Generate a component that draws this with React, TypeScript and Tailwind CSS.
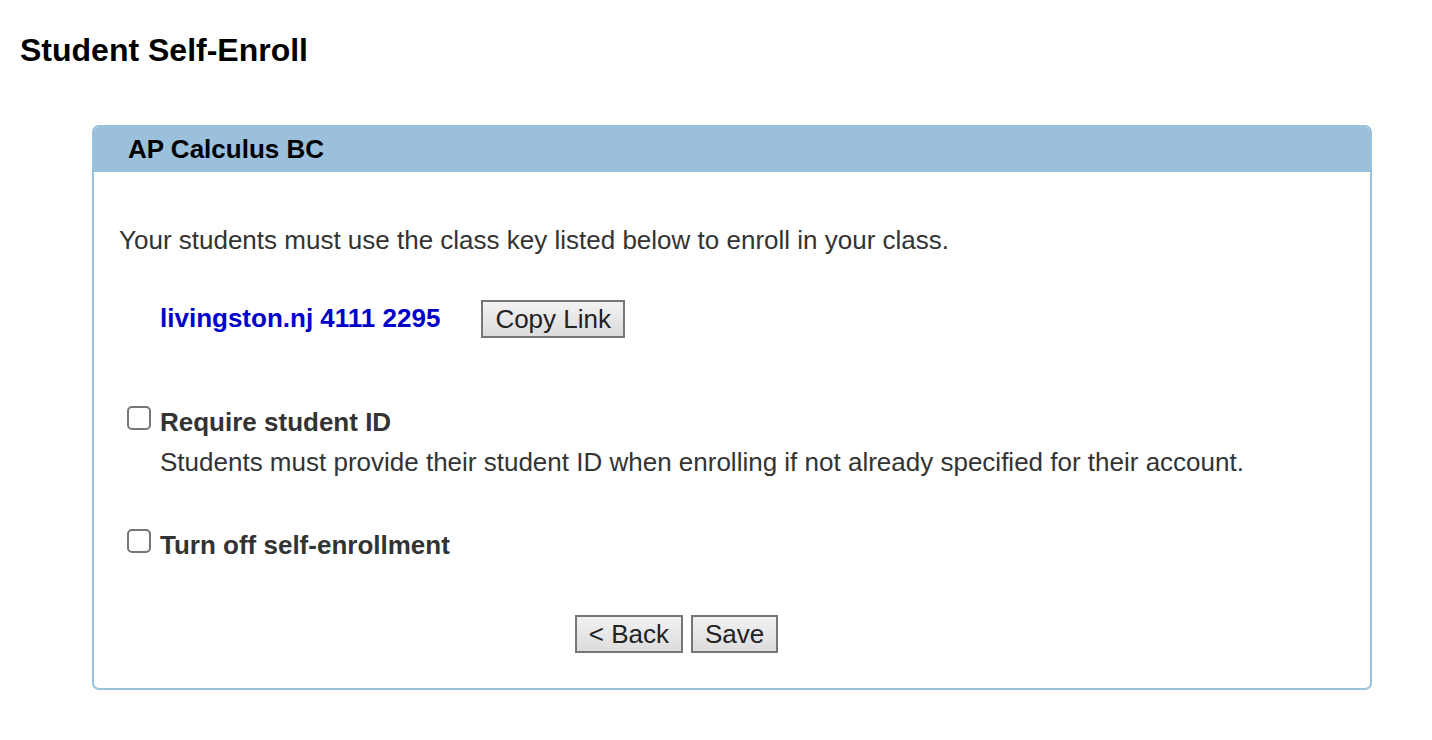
function Checkbox() {
  return <span className="block w-[24px] h-[24px] rounded-[5px] border-2 border-[#767676] bg-white shrink-0" />;
}

function Button({ children, className = "" }: { children: React.ReactNode; className?: string }) {
  return (
    <button
      className={`h-[38px] px-[12px] border-2 border-[#767676] bg-gradient-to-b from-[#f2f2f2] to-[#dcdcdc] text-[26px] leading-none text-[#222] ${className}`}
    >
      {children}
    </button>
  );
}

export default function App() {
  return (
    <div className="min-h-screen bg-white pt-[34px] font-['Liberation_Sans',Arial,sans-serif]">
      <h1 className="pl-[20px] text-[32px] leading-[32px] font-bold text-black">Student Self-Enroll</h1>

      <div className="ml-[92px] mt-[59px] w-[1280px] border-2 border-[#9ac0db] rounded-[7px] overflow-hidden">
        <div className="h-[45px] bg-[#9ac0db] flex items-center pl-[34px]">
          <h2 className="text-[26px] font-bold text-black">AP Calculus BC</h2>
        </div>

        <div className="pl-[25px] pr-[25px] pt-[54px] pb-[35px] text-[#333]">
          <p className="text-[26px] leading-[28px]">
            Your students must use the class key listed below to enroll in your class.
          </p>

          <div className="mt-[45px] pl-[41px] flex items-center gap-[41px]">
            <span className="text-[26px] font-bold text-[#0000cc]">livingston.nj 4111 2295</span>
            <Button>Copy Link</Button>
          </div>

          <div className="mt-[62px] pl-[8px]">
            <div className="flex items-center gap-[9px]">
              <Checkbox />
              <span className="text-[26px] leading-[28px] font-bold mt-[8px]">Require student ID</span>
            </div>
            <p className="mt-[12px] pl-[33px] text-[26px] leading-[28px]">
              Students must provide their student ID when enrolling if not already specified for their account.
            </p>
          </div>

          <div className="mt-[47px] pl-[8px] flex items-center gap-[9px]">
            <Checkbox />
            <span className="text-[26px] leading-[28px] font-bold mt-[8px]">Turn off self-enrollment</span>
          </div>

          <div className="mt-[56px] flex justify-center gap-[8px] pr-[111px]">
            <Button>&lt; Back</Button>
            <Button>Save</Button>
          </div>
        </div>
      </div>
    </div>
  );
}
